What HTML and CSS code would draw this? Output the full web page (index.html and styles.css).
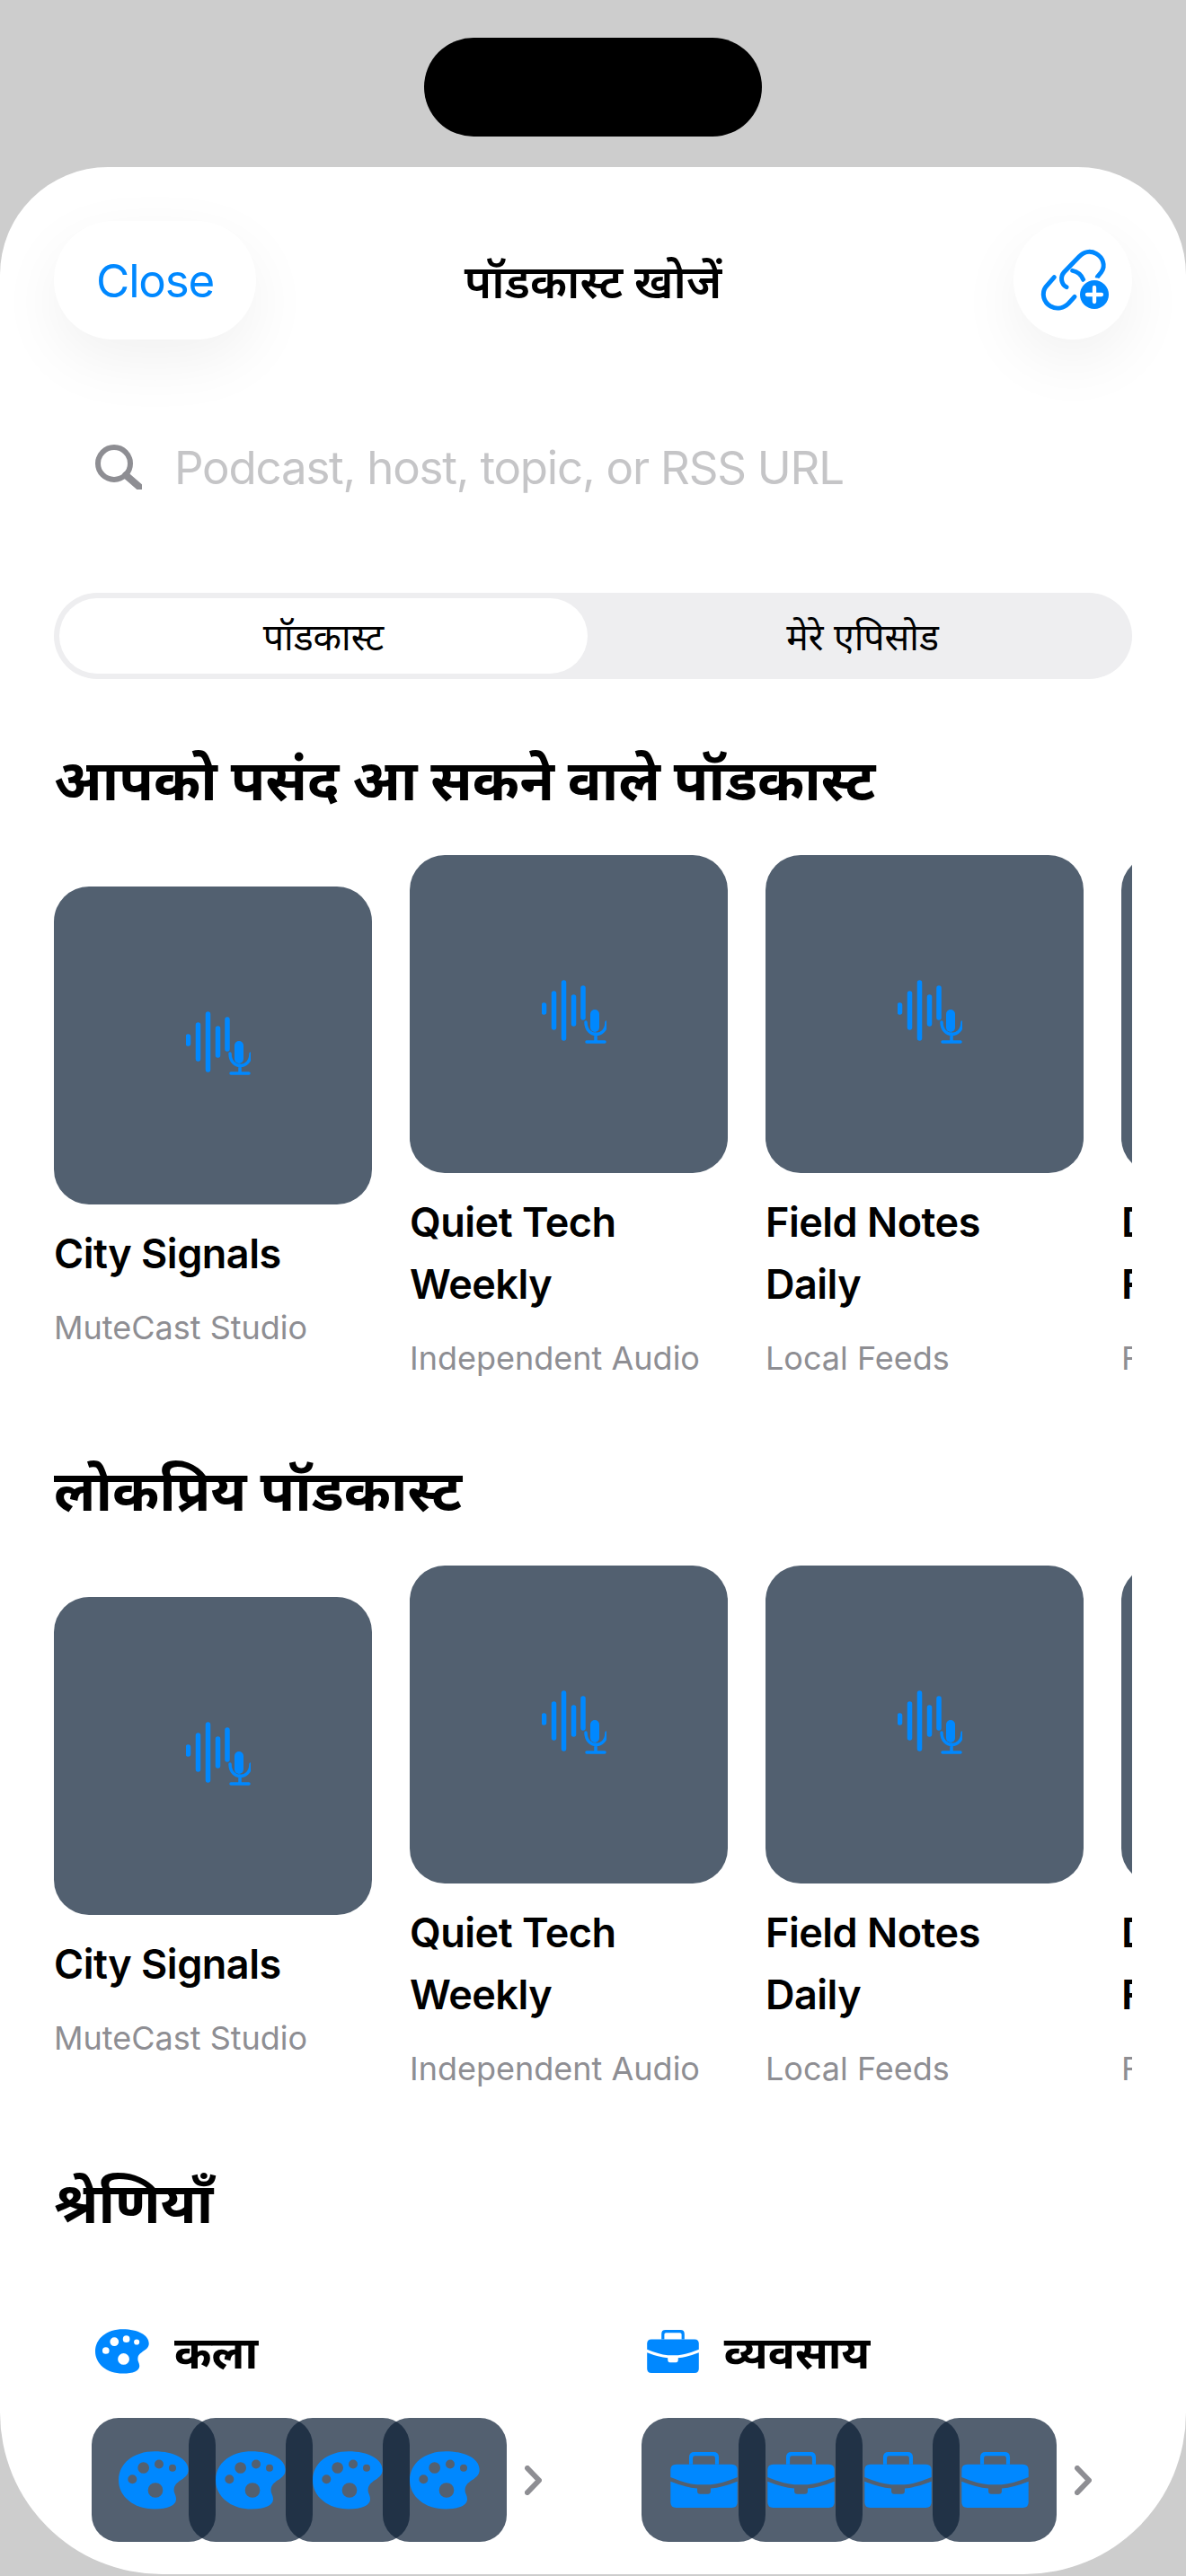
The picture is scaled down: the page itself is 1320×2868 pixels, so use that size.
FILE: index.html
```html
<!DOCTYPE html>
<html lang="hi">
<head>
    <meta charset="UTF-8">
    <meta name="viewport" content="width=device-width, initial-scale=1.0">
    <title>पॉडकास्ट खोजें</title>
    <link rel="stylesheet" href="styles.css">
</head>
<body>
    <svg class="defs" width="0" height="0">
        <symbol id="wave-mic" viewBox="0 0 72 72">
            <path class="wave" d="M2.500 28v8M13.500 15v38M24.500 3v62M35.500 19v30M46 9v33"/>
            <rect x="54" y="33" width="10" height="25" rx="5" fill="currentColor"/>
            <path class="wave-thin" d="M49 47c0 18 23 18 23 0M60 60v9M50 69h20"/>
        </symbol>
        <symbol id="palette" viewBox="0 0 234 194">
            <path fill="currentColor" fill-rule="evenodd" d="M0 97C0 40 50 0 120 0c65 0 113 25 113 62 0 33-43 33-48 63-2 15 7 20 7 35 0 20-27 33-72 33C50 193 0 150 0 97ZM64 55a19 19 0 1 0 38 0a19 19 0 1 0-38 0ZM120 43a15 15 0 1 0 30 0a15 15 0 1 0-30 0ZM168 56a12 12 0 1 0 24 0a12 12 0 1 0-24 0ZM31 93a15 15 0 1 0 30 0a15 15 0 1 0-30 0ZM98 130a25 25 0 1 0 50 0a25 25 0 1 0-50 0Z"/>
        </symbol>
        <symbol id="briefcase" viewBox="0 0 180 150">
            <path fill="currentColor" d="M50 33V14Q50 0 64 0H116Q130 0 130 14V33H120V16Q120 10 114 10H66Q60 10 60 16V33Z"/>
            <path fill="currentColor" d="M0 48Q0 33 15 33H165Q180 33 180 48V68Q140 85 108 88H72Q40 85 0 68Z"/>
            <path fill="currentColor" d="M0 79Q40 95 72 98V105Q72 113 80 113H100Q108 113 108 105V98Q140 95 180 79V135Q180 150 165 150H15Q0 150 0 135Z"/>
        </symbol>
    </svg>

    <!-- status area -->
    <div class="top-area">
        <div class="island"></div>
    </div>

    <div class="sheet">
        <!-- top buttons -->
        <div class="nav">
            <button class="close-btn">Close</button>
            <h1>पॉडकास्ट खोजें</h1>
            <button class="link-btn">
                <svg viewBox="24 18 396 396" width="132" height="132">
                    <g class="link-lines">
                        <path d="M304 205l13-16c16-22 5-50-17-62-20-11-42-6-57 10l-50 52c-14 16-10 40 8 50"/>
                        <path d="M221 184c16 3 30 15 36 30"/>
                        <path d="M160 206l-28 32c-16 22-7 52 16 65 21 11 44 6 60-10l20-22"/>
                    </g>
                    <circle cx="294" cy="264" r="56" fill="#fff"/>
                    <circle cx="294" cy="264" r="48" fill="#0088ff"/>
                    <path d="M294 240v48M270 264h48" stroke="#fff" stroke-width="13" stroke-linecap="round"/>
                </svg>
            </button>
        </div>

        <!-- search -->
        <div class="search">
            <svg viewBox="0 0 52 50" width="52" height="50">
                <circle cx="21" cy="21" r="18" fill="none" stroke="#8e8e93" stroke-width="6"/>
                <path d="M34 34l15 13" stroke="#8e8e93" stroke-width="8" stroke-linecap="round"/>
            </svg>
            <span>Podcast, host, topic, or RSS URL</span>
        </div>

        <!-- tabs -->
        <div class="tabs">
            <div class="tab active">पॉडकास्ट</div>
            <div class="tab">मेरे एपिसोड</div>
        </div>

        <h2>आपको पसंद आ सकने वाले पॉडकास्ट</h2>
        <div class="row">
            <div class="card">
                <div class="art"><svg width="72" height="72"><use href="#wave-mic"/></svg></div>
                <h3>City Signals</h3>
                <p>MuteCast Studio</p>
            </div>
            <div class="card">
                <div class="art"><svg width="72" height="72"><use href="#wave-mic"/></svg></div>
                <h3>Quiet Tech Weekly</h3>
                <p>Independent Audio</p>
            </div>
            <div class="card">
                <div class="art"><svg width="72" height="72"><use href="#wave-mic"/></svg></div>
                <h3>Field Notes Daily</h3>
                <p>Local Feeds</p>
            </div>
            <div class="card">
                <div class="art"><svg width="72" height="72"><use href="#wave-mic"/></svg></div>
                <h3>Deep Dive<br>Forum</h3>
                <p>Fresh Audio</p>
            </div>
        </div>

        <h2 class="second">लोकप्रिय पॉडकास्ट</h2>
        <div class="row">
            <div class="card">
                <div class="art"><svg width="72" height="72"><use href="#wave-mic"/></svg></div>
                <h3>City Signals</h3>
                <p>MuteCast Studio</p>
            </div>
            <div class="card">
                <div class="art"><svg width="72" height="72"><use href="#wave-mic"/></svg></div>
                <h3>Quiet Tech Weekly</h3>
                <p>Independent Audio</p>
            </div>
            <div class="card">
                <div class="art"><svg width="72" height="72"><use href="#wave-mic"/></svg></div>
                <h3>Field Notes Daily</h3>
                <p>Local Feeds</p>
            </div>
            <div class="card">
                <div class="art"><svg width="72" height="72"><use href="#wave-mic"/></svg></div>
                <h3>Deep Dive<br>Forum</h3>
                <p>Fresh Audio</p>
            </div>
        </div>

        <h2 class="third">श्रेणियाँ</h2>
        <div class="categories">
            <div class="category">
                <div class="cat-title">
                    <svg class="cat-icon" width="60" height="50"><use href="#palette"/></svg>
                    <span>कला</span>
                </div>
                <div class="cat-strip">
                    <div class="tile"><svg width="78" height="65"><use href="#palette"/></svg></div>
                    <div class="tile"><svg width="78" height="65"><use href="#palette"/></svg></div>
                    <div class="tile"><svg width="78" height="65"><use href="#palette"/></svg></div>
                    <div class="tile"><svg width="78" height="65"><use href="#palette"/></svg></div>
                    <svg class="chevron" width="19" height="33" viewBox="0 0 19 33"><path d="M3 3l13 13.500L3 30"/></svg>
                </div>
            </div>
            <div class="category">
                <div class="cat-title">
                    <svg class="cat-icon case" width="58" height="48"><use href="#briefcase"/></svg>
                    <span>व्यवसाय</span>
                </div>
                <div class="cat-strip">
                    <div class="tile"><svg width="75" height="62"><use href="#briefcase"/></svg></div>
                    <div class="tile"><svg width="75" height="62"><use href="#briefcase"/></svg></div>
                    <div class="tile"><svg width="75" height="62"><use href="#briefcase"/></svg></div>
                    <div class="tile"><svg width="75" height="62"><use href="#briefcase"/></svg></div>
                    <svg class="chevron" width="19" height="33" viewBox="0 0 19 33"><path d="M3 3l13 13.500L3 30"/></svg>
                </div>
            </div>
        </div>
    </div>
</body>
</html>
```

FILE: styles.css
```css
* {
    box-sizing: border-box;
}

body {
    margin: 0;
    width: 1320px;
    height: 2868px;
    overflow: hidden;
    background-color: #cdcdcd;
    font-family: Inter, "Noto Sans", sans-serif;
    color: #000;
}

.defs {
    position: absolute;
}

.top-area {
    height: 186px;
    padding-top: 42px;
}

.island {
    width: 376px;
    height: 110px;
    margin: 0 auto;
    background: #000;
    border-radius: 55px;
}

.sheet {
    height: 2680px;
    padding: 60px 60px 0;
    background: #fff;
    border-radius: 120px 120px 180px 180px;
    overflow: hidden;
}

/* top buttons */
.nav {
    display: flex;
    justify-content: space-between;
    align-items: center;
    height: 132px;
    position: relative;
}

.nav h1 {
    position: absolute;
    left: 0;
    right: 0;
    margin: 0;
    font-size: 51px;
    font-weight: 600;
    text-align: center;
}

.close-btn,
.link-btn {
    height: 132px;
    border: none;
    background: #fff;
    border-radius: 66px;
    box-shadow: 0 24px 70px rgba(0, 0, 0, 0.06);
    padding: 0;
    font: inherit;
}

.close-btn {
    width: 225px;
    font-size: 51px;
    letter-spacing: -1.2px;
    color: #0088ff;
}

.link-btn {
    width: 132px;
}

.link-btn svg {
    display: block;
}

.link-lines path {
    fill: none;
    stroke: #0088ff;
    stroke-width: 15;
    stroke-linecap: round;
}

/* search */
.search {
    display: flex;
    align-items: center;
    gap: 36px;
    height: 128px;
    margin-top: 78px;
    padding-left: 46px;
    font-size: 51px;
    letter-spacing: -1.2px;
    color: #c5c5c7;
}

/* tabs */
.tabs {
    display: grid;
    grid-template-columns: 1fr 1fr;
    height: 96px;
    margin-top: 76px;
    background: #eeeef0;
    border-radius: 48px;
    font-size: 41px;
}

.tab {
    display: flex;
    align-items: center;
    justify-content: center;
}

.tab.active {
    margin: 6px;
    background: #fff;
    border-radius: 42px;
}

h2 {
    margin: 70px 0 0;
    font-size: 63px;
    font-weight: 700;
    line-height: 84px;
}

h2.second {
    margin-top: 83px;
}

h2.third {
    margin-top: 85px;
}

/* podcast rows */
.row {
    display: flex;
    align-items: center;
    gap: 42px;
    margin-top: 42px;
    overflow: hidden;
}

.card {
    flex: 0 0 354px;
}

.art {
    display: flex;
    align-items: center;
    justify-content: center;
    height: 354px;
    padding: 0 0 4px 12px;
    background: #526070;
    border-radius: 39px;
    color: #0088ff;
}

.card h3 {
    margin: 20px 0 0;
    font-size: 45px;
    font-weight: 600;
    letter-spacing: -0.5px;
    line-height: 69px;
}

.card p {
    margin: 27px 0 0;
    font-size: 36px;
    line-height: 43px;
    color: #8e8e93;
}

.wave {
    fill: none;
    stroke: currentColor;
    stroke-width: 5.500;
    stroke-linecap: round;
}

.wave-thin {
    fill: none;
    stroke: currentColor;
    stroke-width: 3.500;
    stroke-linecap: round;
}

/* categories */
.categories {
    display: grid;
    grid-template-columns: 1fr 1fr;
    gap: 24px;
    margin-top: 99px;
}

.category {
    padding: 0 42px;
}

.cat-title {
    display: flex;
    align-items: center;
    gap: 28px;
    height: 50px;
    padding-left: 4px;
    font-size: 50px;
    font-weight: 700;
}

.cat-icon {
    color: #0088ff;
}

.cat-icon.case {
    margin-left: 2px;
}

.cat-strip {
    display: flex;
    align-items: center;
    margin-top: 49px;
}

.tile {
    display: flex;
    align-items: center;
    justify-content: center;
    flex: 0 0 138px;
    height: 138px;
    margin-right: -30px;
    background: rgba(12, 31, 54, 0.71);
    border-radius: 30px;
    color: #0088ff;
}

.chevron {
    flex: none;
    margin-left: 50px;
}

.chevron path {
    fill: none;
    stroke: #8e8e93;
    stroke-width: 6;
    stroke-linecap: round;
    stroke-linejoin: round;
}
```
